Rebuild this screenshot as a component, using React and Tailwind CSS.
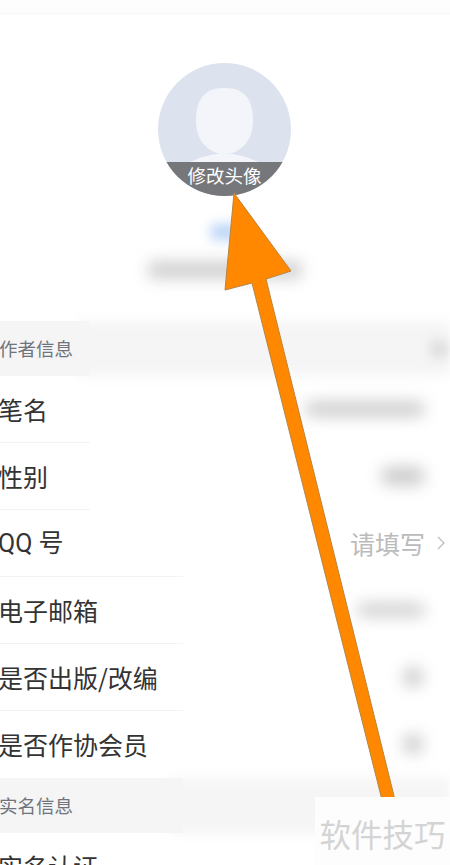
import React from "react";

const font = { fontFamily: '"Noto Sans CJK SC", sans-serif' };

// Blurred value on the right side of a row
const Smudge = ({ className }) => (
  <div className={`rounded-full bg-[#c9c9c9] blur-[8px] ${className}`} />
);

const SectionHeader = ({ title, leftWidth, rightSmudge }) => (
  <div className="flex h-[55px] bg-white">
    <div className={`z-10 flex shrink-0 items-center bg-[#f5f5f6] ${leftWidth}`}>
      <span className="-ml-[1px] text-[18.5px] leading-none text-[#6f747c]">{title}</span>
    </div>
    <div className="-ml-[12px] flex flex-1 items-center justify-end bg-[#f5f5f6] blur-[6px]">
      {rightSmudge && <div className="h-[18px] w-[20px] bg-[#dedede]" />}
    </div>
  </div>
);

const Row = ({ label, children, dividerWidth = "w-[183px]", roman }) => (
  <div className="flex h-[67px] flex-col bg-white">
    <div className="flex flex-1 items-center justify-between">
      <span
        className={`-ml-[2px] text-[25px] leading-none text-[#333333] ${roman ? "font-[Roboto,'Noto_Sans_CJK_SC',sans-serif]" : ""}`}
      >
        {label}
      </span>
      {children}
    </div>
    <div className={`h-px bg-[#f3f3f3] ${dividerWidth}`} />
  </div>
);

const Avatar = () => (
  <div className="relative -ml-[1px] h-[133px] w-[133px] overflow-hidden rounded-full bg-[#dde3ee]">
    <svg viewBox="0 0 133 133" className="h-full w-full">
      <path
        d="M66.5 25 C88 25 95 38 95 58 C95 78 82 91 66.5 91 C51 91 38 78 38 58 C38 38 45 25 66.5 25 Z"
        fill="#f3f5fa"
      />
      <path d="M20 106 Q40 92 66 90 Q92 92 112 106 Z" fill="#f3f5fa" />
    </svg>
    <div className="absolute inset-x-0 bottom-0 flex h-[34px] items-start justify-center bg-[#76777b]">
      <span className="text-[18.5px] leading-[26px] text-white">修改头像</span>
    </div>
  </div>
);

// Annotation arrow drawn over the screenshot
const Arrow = () => (
  <svg className="absolute left-0 top-0 h-[865px] w-[450px]" viewBox="0 0 450 865">
    <path
      d="M234 193 L291 271 L266 279 L395 800 L382 800 L252 283 L225 290 Z"
      fill="#ff8800"
      stroke="#b9843f"
      strokeWidth="1"
    />
  </svg>
);

export default function App() {
  return (
    <div className="relative h-[865px] w-[450px] overflow-hidden bg-white" style={font}>
      <div className="h-[14px] border-b border-[#f6f6f6] bg-[#fdfdfd]" />

      <div className="flex h-[307px] flex-col items-center pt-[49px]">
        <Avatar />
        <div className="mt-[28px] h-[16px] w-[28px] bg-[#bcd6f7] blur-[6px]" />
        <div className="mt-[22px] h-[16px] w-[152px] bg-[#cbcbcb] blur-[8px]" />
      </div>

      <SectionHeader title="作者信息" leftWidth="w-[90px]" rightSmudge />
      <Row label="笔名" dividerWidth="w-[90px]">
        <Smudge className="mr-[25px] h-[14px] w-[120px]" />
      </Row>
      <Row label="性别" dividerWidth="w-[90px]">
        <Smudge className="mr-[25px] h-[18px] w-[44px]" />
      </Row>
      <Row label="QQ 号" roman>
        <div className="flex items-center">
          <span className="text-[25px] leading-none text-[#bbbbbb]">请填写</span>
          <svg viewBox="0 0 8 14" className="ml-[12px] mr-[5px] h-[14px] w-[8px]" fill="none" stroke="#bbbbbb" strokeWidth="1.2">
            <path d="M1 1 L7 7 L1 13" />
          </svg>
        </div>
      </Row>
      <Row label="电子邮箱">
        <Smudge className="mr-[25px] h-[12px] w-[68px]" />
      </Row>
      <Row label="是否出版/改编">
        <Smudge className="mr-[27px] h-[20px] w-[20px]" />
      </Row>
      <Row label="是否作协会员" dividerWidth="w-0">
        <Smudge className="mr-[27px] h-[20px] w-[20px]" />
      </Row>
      <SectionHeader title="实名信息" leftWidth="w-[183px]" />
      <Row label="实名认证" />

      <Arrow />

      <div className="absolute bottom-0 right-0 flex h-[68px] w-[135px] items-start justify-center bg-[#fdfdfd] pt-[18px]">
        <span className="text-[31.5px] leading-[36px] text-[#d4d4d4]">软件技巧</span>
      </div>
    </div>
  );
}
